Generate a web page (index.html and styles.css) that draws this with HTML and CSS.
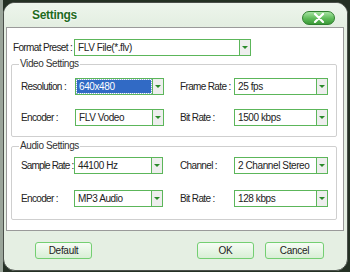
FILE: index.html
```html
<!DOCTYPE html>
<html lang="en">
<head>
  <meta charset="UTF-8">
  <meta name="viewport" content="width=device-width, initial-scale=1.0">
  <title>Settings</title>
  <link rel="stylesheet" href="styles.css">
</head>
<body>
  <div class="dialog">
    <div class="titlebar">
      <span class="title">Settings</span>
      <button class="close" type="button">
        <svg width="12" height="10" viewBox="0 0 12 10">
          <path d="M2 1 L10 9 M10 1 L2 9" stroke="#fff" stroke-width="2.2" stroke-linecap="round"/>
        </svg>
      </button>
    </div>

    <div class="panel">
      <div class="preset-row">
        <span class="label preset-label">Format Preset :</span>
        <div class="combo combo-preset"><span class="value">FLV File(*.flv)</span><span class="arrow"></span></div>
      </div>

      <fieldset class="group group-video">
        <legend>Video Settings</legend>
        <div class="grid">
          <span class="label">Resolution :</span>
          <div class="combo combo-left selected"><span class="value">640x480</span><span class="arrow"></span></div>
          <span class="label">Frame Rate :</span>
          <div class="combo combo-right"><span class="value">25 fps</span><span class="arrow"></span></div>

          <span class="label">Encoder :</span>
          <div class="combo combo-left"><span class="value">FLV Vodeo</span><span class="arrow"></span></div>
          <span class="label">Bit Rate :</span>
          <div class="combo combo-right"><span class="value">1500 kbps</span><span class="arrow"></span></div>
        </div>
      </fieldset>

      <fieldset class="group group-audio">
        <legend>Audio Settings</legend>
        <div class="grid">
          <span class="label label-tight">Sample Rate :</span>
          <div class="combo combo-left"><span class="value">44100 Hz</span><span class="arrow"></span></div>
          <span class="label">Channel :</span>
          <div class="combo combo-right"><span class="value">2 Channel Stereo</span><span class="arrow"></span></div>

          <span class="label">Encoder :</span>
          <div class="combo combo-left"><span class="value">MP3 Audio</span><span class="arrow"></span></div>
          <span class="label">Bit Rate :</span>
          <div class="combo combo-right"><span class="value">128 kbps</span><span class="arrow"></span></div>
        </div>
      </fieldset>
    </div>

    <div class="buttons">
      <button class="btn btn-default" type="button">Default</button>
      <button class="btn btn-ok" type="button">OK</button>
      <button class="btn btn-cancel" type="button">Cancel</button>
    </div>
  </div>
</body>
</html>
```

FILE: styles.css
```css
body {
  margin: 0;
  padding: 2px 0 0 3px;
  background: linear-gradient(90deg, #9aa59a 0, #9aa59a 3px, #243024 3px);
  font-family: "Liberation Sans", Arial, sans-serif;
  font-size: 10px;
  letter-spacing: -0.65px;
  color: #222;
}

.dialog {
  box-sizing: border-box;
  width: 345px;
  height: 269px;
  border: 1px solid #4a4f4a;
  border-radius: 12px;
  background: #e5efe3;
}

.titlebar {
  height: 24px;
  display: flex;
  align-items: center;
  padding: 0 12px 0 28px;
  border-radius: 11px 11px 0 0;
  background: linear-gradient(#edf5ec, #e3eee1);
}

.title {
  font-size: 12px;
  font-weight: bold;
  letter-spacing: -0.3px;
  color: #1e6b1e;
  text-shadow: 0 0 3px #fff, 0 0 2px #fff;
}

.close {
  margin-left: auto;
  margin-top: 5px;
  width: 33px;
  height: 14px;
  padding: 0;
  display: flex;
  align-items: center;
  justify-content: center;
  border: 1px solid #2f7f2f;
  border-radius: 7px;
  background: linear-gradient(#a6e3a2, #5dbb58 55%, #3c9a39);
}

.panel {
  box-sizing: border-box;
  width: 338px;
  height: 204px;
  margin: 0 0 0 2px;
  border: 1px solid #9a9a9a;
  background: #fff;
  padding-top: 11px;
}

.preset-row {
  display: flex;
  align-items: center;
  padding-left: 6px;
}

.preset-label {
  width: 61px;
}

.label {
  white-space: nowrap;
}

.label-tight {
  letter-spacing: -0.85px;
}

.combo {
  box-sizing: border-box;
  height: 17px;
  display: flex;
  border: 1px solid #5cb65a;
  background: #fff;
}

.combo .value {
  flex: 1;
  padding-left: 3px;
  line-height: 15px;
  font-size: 10px;
  letter-spacing: -0.4px;
  white-space: nowrap;
  overflow: hidden;
}

.combo .arrow {
  width: 10px;
  border-left: 1px solid #5cb65a;
  background: #eeeeee;
  display: flex;
  align-items: center;
  justify-content: center;
}

.combo .arrow::after {
  content: "";
  border-left: 3px solid transparent;
  border-right: 3px solid transparent;
  border-top: 3px solid #2b8a2b;
}

.combo.selected .value {
  margin: 1px;
  padding-left: 2px;
  line-height: 13px;
  background: #316ac5;
  color: #fff;
  outline: 1px dotted #8fa9d8;
}

.combo-preset {
  width: 177px;
}

.combo-left {
  width: 89px;
}

.combo-right {
  width: 94px;
}

.group {
  box-sizing: border-box;
  width: 326px;
  margin: 2px 0 0 4px;
  border: 1px solid #cfcfcf;
  border-radius: 2px;
  padding: 8px 0 8px 9px;
}

.group legend {
  padding: 0 1px;
  margin-left: -2px;
  line-height: 12px;
  font-size: 10px;
  letter-spacing: -0.4px;
  color: #333;
}

.group-video {
  height: 79px;
}

.group-audio {
  margin-top: 3px;
  height: 80px;
  padding-top: 5px;
}

.grid {
  display: grid;
  grid-template-columns: 54px 105px 54px 94px;
  align-items: center;
  row-gap: 14px;
}

.group-audio .grid {
  grid-template-columns: 53px 106px 54px 94px;
  row-gap: 16px;
}

.buttons {
  display: flex;
  margin-top: 11px;
  padding: 0 23px 0 31px;
}

.btn {
  box-sizing: border-box;
  height: 17px;
  padding: 0;
  border: 1px solid #74cf72;
  border-radius: 3px;
  background: linear-gradient(#f6fcf5, #d9efd6);
  font-family: inherit;
  font-size: 10px;
  letter-spacing: -0.3px;
  color: #222;
}

.btn-default {
  width: 57px;
}

.btn-ok {
  width: 57px;
  margin-left: auto;
}

.btn-cancel {
  width: 59px;
  margin-left: 11px;
}
```
